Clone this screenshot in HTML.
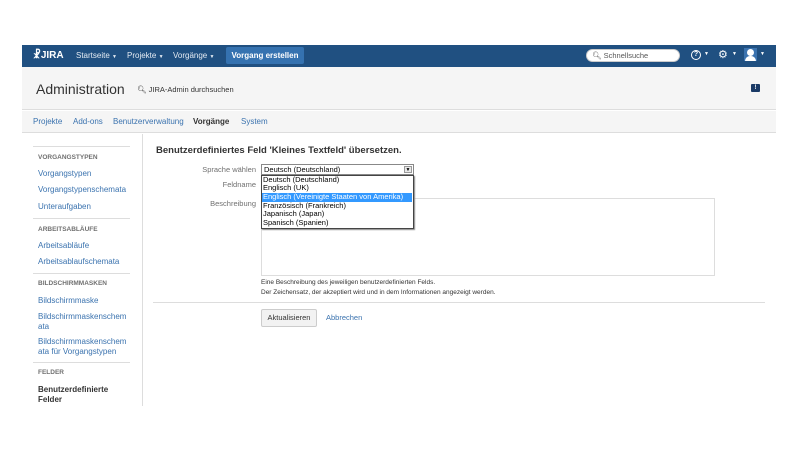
<!DOCTYPE html>
<html><head><meta charset="utf-8"><style>
*{margin:0;padding:0;box-sizing:border-box}
body{width:800px;height:450px;background:#fff;font-family:"Liberation Sans",Arial,sans-serif;position:relative;overflow:hidden;color:#333}
.a{position:absolute;white-space:nowrap}
.nav{left:22px;top:45px;width:754px;height:22px;background:#205081}
.nt{color:#e4ebf3;font-size:8px;top:51px}
.hd{left:22px;top:67px;width:754px;height:43px;background:#f5f5f5;border-bottom:1px solid #ddd}
.tabs{left:22px;top:111px;width:754px;height:22px;background:#f5f5f5;border-bottom:1px solid #ddd}
.tab{font-size:8px;color:#3b73af;top:117px}
.side{font-size:8px;color:#3b73af;left:38px}
.sh{font-size:6.5px;color:#707070;left:38px;font-weight:bold}
.sl{left:33px;width:97px;height:1px;background:#ddd}
.lbl{font-size:7.5px;color:#707070;text-align:right;width:100px;left:156px}
.opt{left:262px;font-size:7.5px;color:#000;width:150px;padding-left:1px;height:8.7px;line-height:8.7px}
</style></head><body>
<div class="a nav"></div>
<div class="a" style="left:33px;top:50px;color:#fff;font-size:10px;font-weight:bold">&#x2627;JIRA</div>
<div class="a nt" style="left:76px">Startseite <span style="font-size:5px">▼</span></div>
<div class="a nt" style="left:127px">Projekte <span style="font-size:5px">▼</span></div>
<div class="a nt" style="left:173px">Vorgänge <span style="font-size:5px">▼</span></div>
<div class="a" style="left:226px;top:47px;width:78px;height:17px;background:#3572b0;border-radius:2px;color:#fff;font-size:8px;font-weight:bold;text-align:center;line-height:17px">Vorgang erstellen</div>
<div class="a" style="left:586px;top:49px;width:94px;height:13px;background:#fff;border-radius:7px;border:1px solid #ccc;font-size:7.5px;color:#555;line-height:11px;padding-left:5px">&#x1F50D;&#xFE0E; Schnellsuche</div>
<div class="a" style="left:691px;top:50px;width:10px;height:10px;border:1.3px solid #fff;border-radius:50%;color:#fff;font-size:7px;font-weight:bold;text-align:center;line-height:8px">?</div>
<div class="a" style="left:704px;top:51px;color:#fff;font-size:5px">▼</div>
<div class="a" style="left:718px;top:48px;color:#fff;font-size:11px">&#x2699;</div>
<div class="a" style="left:732px;top:51px;color:#fff;font-size:5px">▼</div>
<div class="a" style="left:744px;top:48px;width:13px;height:13px;background:#3b73af;overflow:hidden"><div class="a" style="left:3px;top:1px;width:7px;height:7px;border-radius:50%;background:#fff"></div><div class="a" style="left:1px;top:8px;width:11px;height:5px;border-radius:5px 5px 0 0;background:#fff"></div></div>
<div class="a" style="left:760px;top:51px;color:#fff;font-size:5px">▼</div>
<div class="a hd"></div>
<div class="a" style="left:36px;top:81px;font-size:14px;color:#333">Administration</div>
<div class="a" style="left:137px;top:85px;font-size:7.5px;color:#333">&#x1F50D;&#xFE0E; JIRA-Admin durchsuchen</div>
<div class="a" style="left:751px;top:84px;width:9px;height:8px;background:#1a3a66;border-radius:1px;color:#fff;font-size:6px;text-align:center;line-height:8px;font-weight:bold">!</div>
<div class="a tabs"></div>
<div class="a tab" style="left:33px">Projekte</div>
<div class="a tab" style="left:73px">Add-ons</div>
<div class="a tab" style="left:113px">Benutzerverwaltung</div>
<div class="a tab" style="left:193px;color:#333;font-weight:bold">Vorgänge</div>
<div class="a tab" style="left:241px">System</div>
<div class="a" style="left:142px;top:134px;width:1px;height:272px;background:#ddd"></div>
<div class="a sl" style="top:146px"></div>
<div class="a sh" style="top:154px">VORGANGSTYPEN</div>
<div class="a side" style="top:169px">Vorgangstypen</div>
<div class="a side" style="top:185px">Vorgangstypenschemata</div>
<div class="a side" style="top:202px">Unteraufgaben</div>
<div class="a sl" style="top:218px"></div>
<div class="a sh" style="top:226px">ARBEITSABLÄUFE</div>
<div class="a side" style="top:241px">Arbeitsabläufe</div>
<div class="a side" style="top:257px">Arbeitsablaufschemata</div>
<div class="a sl" style="top:273px"></div>
<div class="a sh" style="top:280px">BILDSCHIRMMASKEN</div>
<div class="a side" style="top:296px">Bildschirmmaske</div>
<div class="a side" style="top:312px;line-height:10px">Bildschirmmaskenschem<br>ata</div>
<div class="a side" style="top:337px;line-height:10px">Bildschirmmaskenschem<br>ata für Vorgangstypen</div>
<div class="a sl" style="top:362px"></div>
<div class="a sh" style="top:369px">FELDER</div>
<div class="a side" style="top:385px;color:#333;font-weight:bold;line-height:9.5px">Benutzerdefinierte<br>Felder</div>
<div class="a" style="left:156px;top:145px;font-size:9.5px;font-weight:bold;color:#333">Benutzerdefiniertes Feld 'Kleines Textfeld' übersetzen.</div>
<div class="a lbl" style="top:165px">Sprache wählen</div>
<div class="a lbl" style="top:180px">Feldname</div>
<div class="a lbl" style="top:199px">Beschreibung</div>
<div class="a" style="left:261px;top:198px;width:454px;height:78px;border:1px solid #ddd;background:#fff"></div>
<div class="a" style="left:261px;top:164px;width:153px;height:11px;border:1px solid #888;background:#fff;font-size:7.5px;color:#000;line-height:9px;padding-left:2px">Deutsch (Deutschland)<div class="a" style="right:1px;top:1px;width:8px;height:7px;background:#e8e8e8;border:1px solid #999;font-size:5px;text-align:center;line-height:6px">▼</div></div>
<div class="a" style="left:261px;top:175px;width:153px;height:54px;border:1px solid #444;background:#fff;box-shadow:1px 1px 1px #888"></div>
<div class="a opt" style="top:175.5px">Deutsch (Deutschland)</div>
<div class="a opt" style="top:184.2px">Englisch (UK)</div>
<div class="a opt" style="top:192.9px;background:#3399ff;color:#fff">Englisch (Vereinigte Staaten von Amerika)</div>
<div class="a opt" style="top:201.6px">Französisch (Frankreich)</div>
<div class="a opt" style="top:210.3px">Japanisch (Japan)</div>
<div class="a opt" style="top:219px">Spanisch (Spanien)</div>
<div class="a" style="left:261px;top:279px;font-size:6.5px;color:#333">Eine Beschreibung des jeweiligen benutzerdefinierten Felds.</div>
<div class="a" style="left:261px;top:289px;font-size:6.5px;color:#333">Der Zeichensatz, der akzeptiert wird und in dem Informationen angezeigt werden.</div>
<div class="a" style="left:153px;top:302px;width:612px;height:1px;background:#ddd"></div>
<div class="a" style="left:261px;top:309px;width:56px;height:18px;border:1px solid #ccc;border-radius:2px;background:#f2f2f2;font-size:7.5px;color:#333;text-align:center;line-height:16px">Aktualisieren</div>
<div class="a" style="left:326px;top:313px;font-size:7.5px;color:#3b73af">Abbrechen</div>
</body></html>
